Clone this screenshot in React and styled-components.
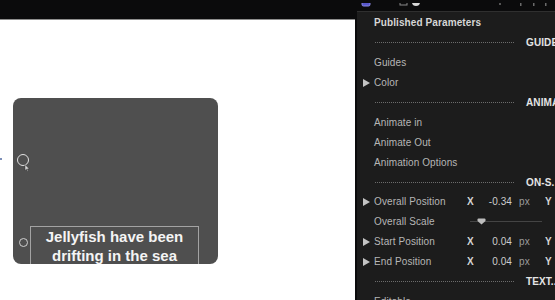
import styled, { createGlobalStyle } from "styled-components";

const GlobalStyle = createGlobalStyle`
    html, body {
        margin: 0;
        padding: 0;
        background-color: #0b0b0c;
    }
    body {
        width: 555px;
        height: 300px;
        overflow: hidden;
        font-family: "Liberation Sans", Arial, sans-serif;
    }
`;

const StyledScreen = styled.div`
    display: flex;
    width: 555px;
    height: 300px;
    background-color: #0b0b0c;
    overflow: hidden;
`;

const StyledViewer = styled.div`
    display: flex;
    flex-direction: column;
    width: 355px;
    padding-top: 19px;
    box-sizing: border-box;
`;

const StyledCanvas = styled.div`
    flex: 1;
    position: relative;
    padding: 78px 0 0 13px;
    background-color: #ffffff;
    border-top: 1px solid #8e8e8e;
`;

const StyledClip = styled.div`
    position: relative;
    display: flex;
    flex-direction: column;
    justify-content: flex-end;
    width: 205px;
    height: 166px;
    padding-left: 17px;
    box-sizing: border-box;
    background-color: #4f4f4f;
    border-radius: 8px;
    overflow: hidden;
`;

const StyledTextBox = styled.div`
    width: 169px;
    height: 41px;
    margin-bottom: -3px;
    box-sizing: border-box;
    border: 1px solid #a3a3a3;
    font-size: 15px;
    font-weight: bold;
    line-height: 19px;
    text-align: center;
    color: #f4f4f4;
`;

const StyledHandle = styled.div`
    position: absolute;
    left: ${props => props.x}px;
    top: ${props => props.y}px;
    width: ${props => props.size}px;
    height: ${props => props.size}px;
    box-sizing: border-box;
    border: 1.5px solid ${props => props.color || "#e2e2e2"};
    border-radius: 50%;
`;

const StyledPointer = styled.svg`
    position: absolute;
    left: 11px;
    top: 66px;
`;

const StyledDot = styled.div`
    position: absolute;
    left: 0;
    top: 138px;
    width: 2px;
    height: 2px;
    background-color: #7d8fb8;
`;

const StyledInspector = styled.div`
    flex: 1;
    display: flex;
    flex-direction: column;
    margin-left: 2px;
    overflow: hidden;
`;

const StyledToolbar = styled.div`
    height: 11px;
    overflow: hidden;
`;

const StyledPanel = styled.div`
    flex: 1;
    padding-top: 1px;
    background-color: #1c1c1c;
    border-top: 1px solid #2f2f2f;
    overflow: hidden;
`;

const StyledRow = styled.div`
    display: flex;
    align-items: center;
    height: 19.9px;
    padding-left: 6px;
    font-size: 10px;
    font-weight: ${props => props.bold ? "bold" : "normal"};
    letter-spacing: 0.1px;
    color: ${props => props.bold ? "#d6d6d6" : "#b6b6b6"};
    white-space: nowrap;
`;

const StyledGutter = styled.div`
    display: flex;
    align-items: center;
    width: 11px;
    flex-shrink: 0;
`;

const StyledTriangle = styled.div`
    width: 0;
    height: 0;
    border-left: 7px solid #c4c4c4;
    border-top: 4px solid transparent;
    border-bottom: 4px solid transparent;
`;

const StyledDots = styled.div`
    width: 140px;
    height: 1px;
    margin-left: 1px;
    flex-shrink: 0;
    background: repeating-linear-gradient(90deg, #6c6c6c 0 1px, transparent 1px 2px);
`;

const StyledSectionLabel = styled.div`
    margin-left: 11px;
    font-weight: bold;
    color: #e4e4e4;
`;

const StyledLabel = styled.div`
    width: 93px;
    flex-shrink: 0;
`;

const StyledAxis = styled.div`
    width: 10px;
    flex-shrink: 0;
    font-weight: bold;
    color: #d4d4d4;
`;

const StyledValue = styled.div`
    width: 35px;
    flex-shrink: 0;
    text-align: right;
    color: #cdcdcd;
`;

const StyledUnit = styled.div`
    width: 26px;
    margin-left: 7px;
    flex-shrink: 0;
    color: #9c9c9c;
`;

const StyledTrack = styled.div`
    position: relative;
    width: 72px;
    height: 1px;
    margin-left: 3px;
    background-color: #444444;
`;

const StyledThumb = styled.svg`
    position: absolute;
    left: 7px;
    top: -3px;
`;

function Section({ label }) {
    return (
        <StyledRow>
            <StyledGutter />
            <StyledDots />
            <StyledSectionLabel>{label}</StyledSectionLabel>
        </StyledRow>
    );
}

function Item({ label, open }) {
    return (
        <StyledRow>
            <StyledGutter>{open && <StyledTriangle />}</StyledGutter>
            {label}
        </StyledRow>
    );
}

function PositionRow({ label, value }) {
    return (
        <StyledRow>
            <StyledGutter><StyledTriangle /></StyledGutter>
            <StyledLabel>{label}</StyledLabel>
            <StyledAxis>X</StyledAxis>
            <StyledValue>{value}</StyledValue>
            <StyledUnit>px</StyledUnit>
            <StyledAxis>Y</StyledAxis>
        </StyledRow>
    );
}

export default function App() {
    return (
        <>
            <GlobalStyle />
            <StyledScreen>
                <StyledViewer>
                    <StyledCanvas>
                        <StyledDot />
                        <StyledClip>
                            <StyledHandle x={4} y={56} size={12} />
                            <StyledPointer width="6" height="8" viewBox="0 0 6 8">
                                <path d="M1 0.5 L1 6.5 L2.5 5.2 L3.6 7.5 L4.4 7.1 L3.4 4.9 L5.2 4.8 Z" fill="#d9d9d9" stroke="#333" strokeWidth="0.5" />
                            </StyledPointer>
                            <StyledHandle x={6} y={140} size={9} color="#cfcfcf" />
                            <StyledTextBox>Jellyfish have been drifting in the sea</StyledTextBox>
                        </StyledClip>
                    </StyledCanvas>
                </StyledViewer>
                <StyledInspector>
                    <StyledToolbar>
                        <svg width="198" height="11" viewBox="0 0 198 11">
                            <rect x="5" y="-6" width="8" height="9" rx="1.5" fill="#5857c9" stroke="#8b8ae6" strokeWidth="1" />
                            <rect x="43" y="-4" width="7" height="6" fill="none" stroke="#8a8a8a" strokeWidth="1" />
                            <circle cx="59" cy="-1" r="4" fill="#d8d8d8" />
                            <rect x="142" y="0" width="2" height="2" fill="#555" />
                            <rect x="163" y="0" width="1.5" height="3" fill="#6a6a6a" />
                            <rect x="176" y="0" width="1.5" height="3" fill="#6a6a6a" />
                            <rect x="188" y="0" width="1.5" height="3" fill="#6a6a6a" />
                        </svg>
                    </StyledToolbar>
                    <StyledPanel>
                        <StyledRow bold>
                            <StyledGutter />
                            Published Parameters
                        </StyledRow>
                        <Section label="GUIDE" />
                        <Item label="Guides" />
                        <Item label="Color" open />
                        <Section label="ANIMA" />
                        <Item label="Animate in" />
                        <Item label="Animate Out" />
                        <Item label="Animation Options" />
                        <Section label="ON-S." />
                        <PositionRow label="Overall Position" value="-0.34" />
                        <StyledRow>
                            <StyledGutter />
                            <StyledLabel>Overall Scale</StyledLabel>
                            <StyledTrack>
                                <StyledThumb width="9" height="7" viewBox="0 0 9 7">
                                    <path d="M1.5 0.5 H7.5 Q8.5 0.5 8.5 1.5 V3 L4.5 6.5 L0.5 3 V1.5 Q0.5 0.5 1.5 0.5 Z" fill="#bdbdbd" />
                                </StyledThumb>
                            </StyledTrack>
                        </StyledRow>
                        <PositionRow label="Start Position" value="0.04" />
                        <PositionRow label="End Position" value="0.04" />
                        <Section label="TEXT.." />
                        <Item label="Editable" />
                    </StyledPanel>
                </StyledInspector>
            </StyledScreen>
        </>
    );
}
